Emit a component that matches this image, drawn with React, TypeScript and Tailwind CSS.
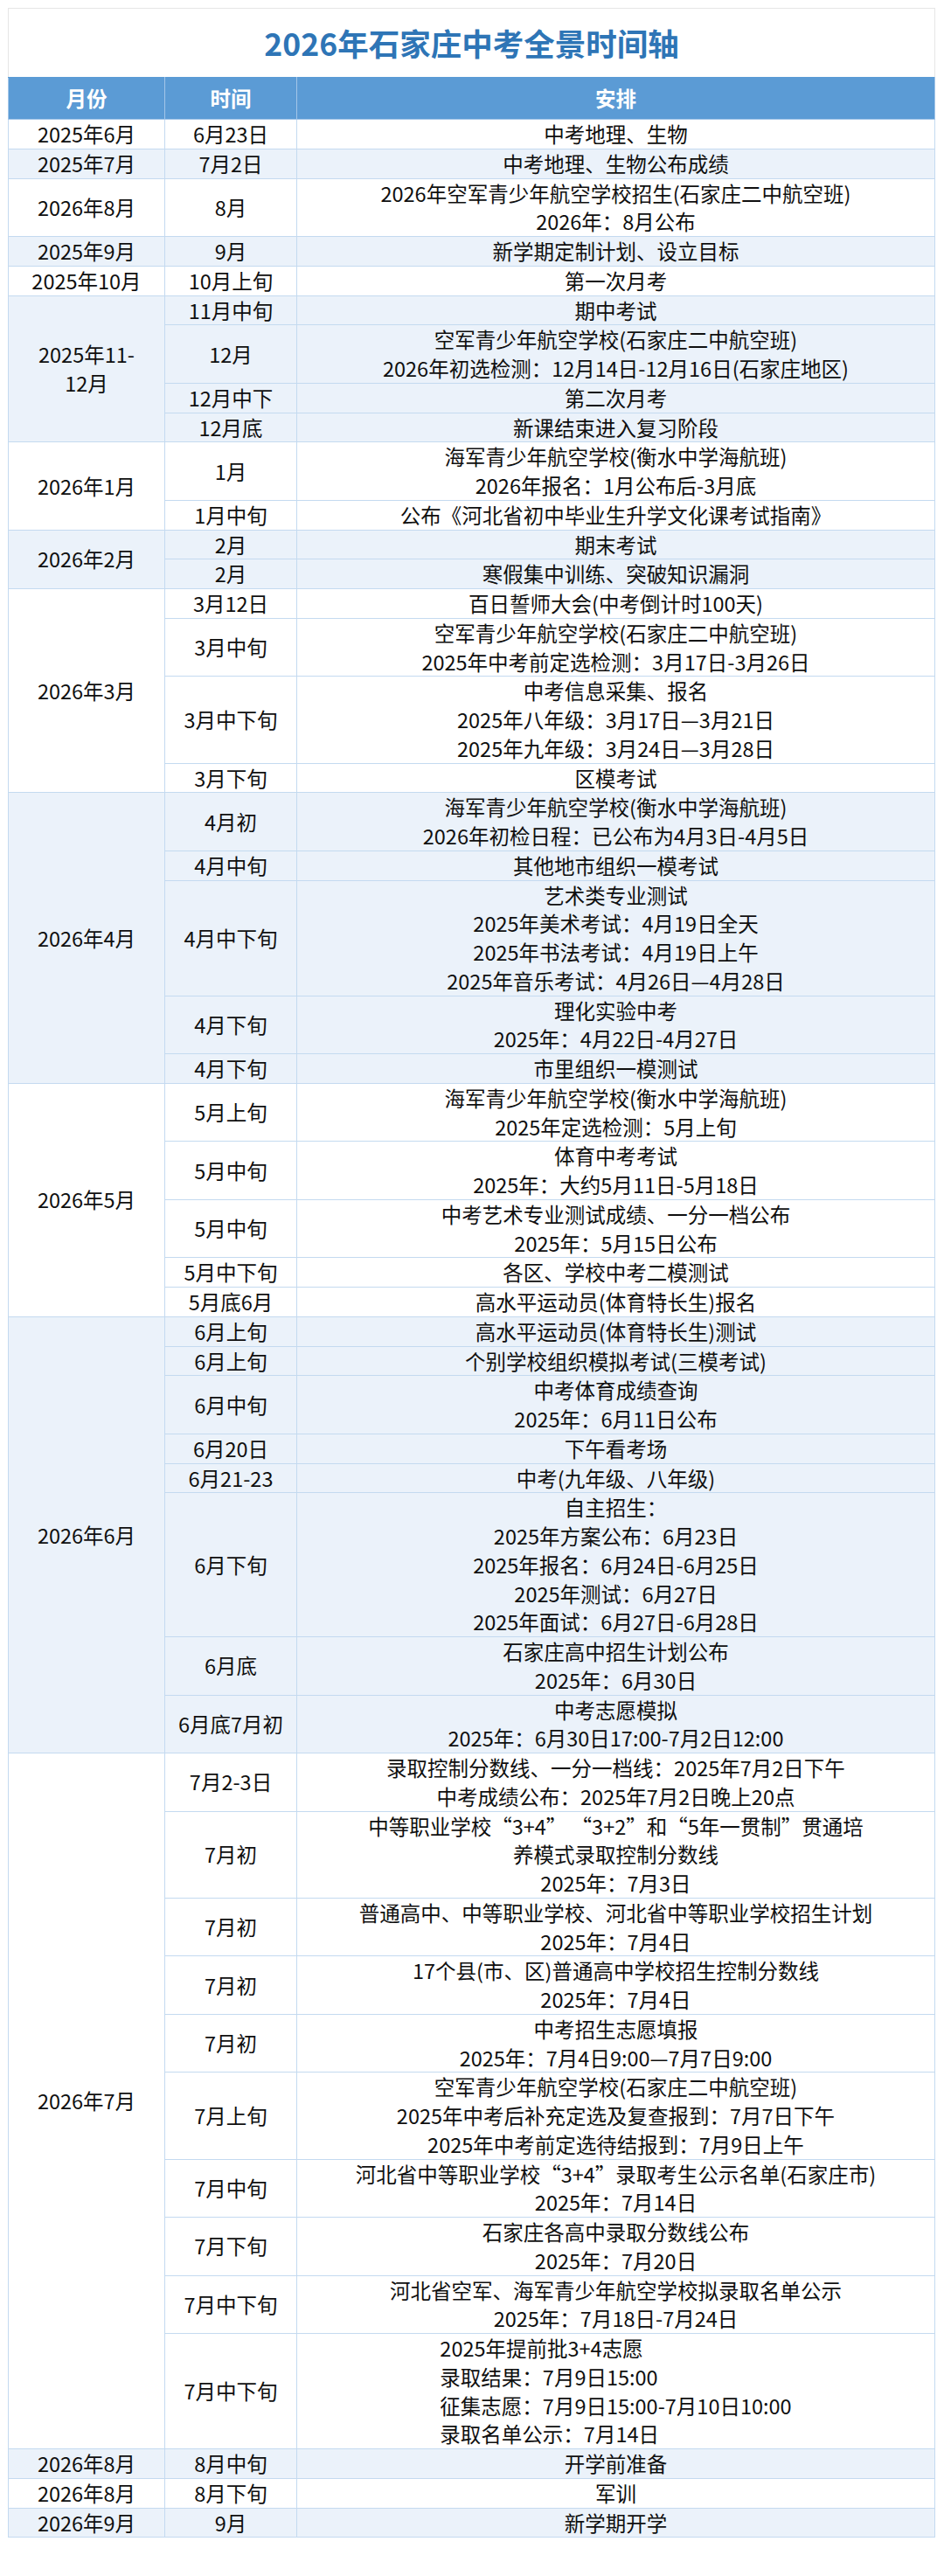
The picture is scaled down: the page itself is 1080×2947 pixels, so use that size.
type Item = { time: string; lines: string[]; left?: boolean };
type Group = { month: string[]; items: Item[] };

const groups: Group[] = [
  { month: ["2025年6月"], items: [{ time: "6月23日", lines: ["中考地理、生物"] }] },
  { month: ["2025年7月"], items: [{ time: "7月2日", lines: ["中考地理、生物公布成绩"] }] },
  {
    month: ["2026年8月"],
    items: [{ time: "8月", lines: ["2026年空军青少年航空学校招生(石家庄二中航空班)", "2026年：8月公布"] }],
  },
  { month: ["2025年9月"], items: [{ time: "9月", lines: ["新学期定制计划、设立目标"] }] },
  { month: ["2025年10月"], items: [{ time: "10月上旬", lines: ["第一次月考"] }] },
  {
    month: ["2025年11-", "12月"],
    items: [
      { time: "11月中旬", lines: ["期中考试"] },
      { time: "12月", lines: ["空军青少年航空学校(石家庄二中航空班)", "2026年初选检测：12月14日-12月16日(石家庄地区)"] },
      { time: "12月中下", lines: ["第二次月考"] },
      { time: "12月底", lines: ["新课结束进入复习阶段"] },
    ],
  },
  {
    month: ["2026年1月"],
    items: [
      { time: "1月", lines: ["海军青少年航空学校(衡水中学海航班)", "2026年报名：1月公布后-3月底"] },
      { time: "1月中旬", lines: ["公布《河北省初中毕业生升学文化课考试指南》"] },
    ],
  },
  {
    month: ["2026年2月"],
    items: [
      { time: "2月", lines: ["期末考试"] },
      { time: "2月", lines: ["寒假集中训练、突破知识漏洞"] },
    ],
  },
  {
    month: ["2026年3月"],
    items: [
      { time: "3月12日", lines: ["百日誓师大会(中考倒计时100天)"] },
      { time: "3月中旬", lines: ["空军青少年航空学校(石家庄二中航空班)", "2025年中考前定选检测：3月17日-3月26日"] },
      {
        time: "3月中下旬",
        lines: ["中考信息采集、报名", "2025年八年级：3月17日—3月21日", "2025年九年级：3月24日—3月28日"],
      },
      { time: "3月下旬", lines: ["区模考试"] },
    ],
  },
  {
    month: ["2026年4月"],
    items: [
      { time: "4月初", lines: ["海军青少年航空学校(衡水中学海航班)", "2026年初检日程：已公布为4月3日-4月5日"] },
      { time: "4月中旬", lines: ["其他地市组织一模考试"] },
      {
        time: "4月中下旬",
        lines: [
          "艺术类专业测试",
          "2025年美术考试：4月19日全天",
          "2025年书法考试：4月19日上午",
          "2025年音乐考试：4月26日—4月28日",
        ],
      },
      { time: "4月下旬", lines: ["理化实验中考", "2025年：4月22日-4月27日"] },
      { time: "4月下旬", lines: ["市里组织一模测试"] },
    ],
  },
  {
    month: ["2026年5月"],
    items: [
      { time: "5月上旬", lines: ["海军青少年航空学校(衡水中学海航班)", "2025年定选检测：5月上旬"] },
      { time: "5月中旬", lines: ["体育中考考试", "2025年：大约5月11日-5月18日"] },
      { time: "5月中旬", lines: ["中考艺术专业测试成绩、一分一档公布", "2025年：5月15日公布"] },
      { time: "5月中下旬", lines: ["各区、学校中考二模测试"] },
      { time: "5月底6月", lines: ["高水平运动员(体育特长生)报名"] },
    ],
  },
  {
    month: ["2026年6月"],
    items: [
      { time: "6月上旬", lines: ["高水平运动员(体育特长生)测试"] },
      { time: "6月上旬", lines: ["个别学校组织模拟考试(三模考试)"] },
      { time: "6月中旬", lines: ["中考体育成绩查询", "2025年：6月11日公布"] },
      { time: "6月20日", lines: ["下午看考场"] },
      { time: "6月21-23", lines: ["中考(九年级、八年级)"] },
      {
        time: "6月下旬",
        lines: [
          "自主招生：",
          "2025年方案公布：6月23日",
          "2025年报名：6月24日-6月25日",
          "2025年测试：6月27日",
          "2025年面试：6月27日-6月28日",
        ],
      },
      { time: "6月底", lines: ["石家庄高中招生计划公布", "2025年：6月30日"] },
      { time: "6月底7月初", lines: ["中考志愿模拟", "2025年：6月30日17:00-7月2日12:00"] },
    ],
  },
  {
    month: ["2026年7月"],
    items: [
      { time: "7月2-3日", lines: ["录取控制分数线、一分一档线：2025年7月2日下午", "中考成绩公布：2025年7月2日晚上20点"] },
      {
        time: "7月初",
        lines: ["中等职业学校“3+4” “3+2”和“5年一贯制”贯通培", "养模式录取控制分数线", "2025年：7月3日"],
      },
      { time: "7月初", lines: ["普通高中、中等职业学校、河北省中等职业学校招生计划", "2025年：7月4日"] },
      { time: "7月初", lines: ["17个县(市、区)普通高中学校招生控制分数线", "2025年：7月4日"] },
      { time: "7月初", lines: ["中考招生志愿填报", "2025年：7月4日9:00—7月7日9:00"] },
      {
        time: "7月上旬",
        lines: [
          "空军青少年航空学校(石家庄二中航空班)",
          "2025年中考后补充定选及复查报到：7月7日下午",
          "2025年中考前定选待结报到：7月9日上午",
        ],
      },
      { time: "7月中旬", lines: ["河北省中等职业学校“3+4”录取考生公示名单(石家庄市)", "2025年：7月14日"] },
      { time: "7月下旬", lines: ["石家庄各高中录取分数线公布", "2025年：7月20日"] },
      { time: "7月中下旬", lines: ["河北省空军、海军青少年航空学校拟录取名单公示", "2025年：7月18日-7月24日"] },
      {
        time: "7月中下旬",
        left: true,
        lines: ["2025年提前批3+4志愿", "录取结果：7月9日15:00", "征集志愿：7月9日15:00-7月10日10:00", "录取名单公示：7月14日"],
      },
    ],
  },
  { month: ["2026年8月"], items: [{ time: "8月中旬", lines: ["开学前准备"] }] },
  { month: ["2026年8月"], items: [{ time: "8月下旬", lines: ["军训"] }] },
  { month: ["2026年9月"], items: [{ time: "9月", lines: ["新学期开学"] }] },
];

const cell = "border border-[#c4daf0] p-0 text-center align-middle leading-[32.75px]";

export default function App() {
  return (
    <div className="min-h-[2947px] bg-white pl-[9px] pr-[10px] pt-[9px] font-['Noto_Sans_CJK_SC',sans-serif] text-[23.5px] text-[#0f0f0f]">
      <div className="flex h-[79px] items-center justify-center border border-b-0 border-[#e6e6e6] text-[35.5px] font-bold text-[#2e75b6]">
        2026年石家庄中考全景时间轴
      </div>
      <table className="w-full table-fixed border-collapse border border-[#a8c9ea]">
        <colgroup>
          <col className="w-[179px]" />
          <col className="w-[151px]" />
          <col />
        </colgroup>
        <thead>
          <tr className="h-[48px] bg-[#5b9bd5] font-bold text-white">
            <th className="border border-[#a3c6e9] border-t-[#5b9bd5] p-0 align-middle">月份</th>
            <th className="border border-[#a3c6e9] border-t-[#5b9bd5] p-0 align-middle">时间</th>
            <th className="border border-[#a3c6e9] border-t-[#5b9bd5] p-0 align-middle">安排</th>
          </tr>
        </thead>
        <tbody>
          {groups.map((g, gi) =>
            g.items.map((it, ii) => (
              <tr key={`${gi}-${ii}`} className={gi % 2 === 1 ? "bg-[#ebf2fa]" : "bg-white"}>
                {ii === 0 && (
                  <td rowSpan={g.items.length} className={cell}>
                    {g.month.map((m) => (
                      <div key={m}>{m}</div>
                    ))}
                  </td>
                )}
                <td className={`${cell} whitespace-nowrap overflow-hidden`}>{it.time}</td>
                <td className={cell}>
                  {it.left ? (
                    <div className="inline-block text-left">
                      {it.lines.map((l) => (
                        <div key={l} className="whitespace-nowrap">
                          {l}
                        </div>
                      ))}
                    </div>
                  ) : (
                    it.lines.map((l) => (
                      <div key={l} className="whitespace-nowrap">
                        {l}
                      </div>
                    ))
                  )}
                </td>
              </tr>
            ))
          )}
        </tbody>
      </table>
    </div>
  );
}
